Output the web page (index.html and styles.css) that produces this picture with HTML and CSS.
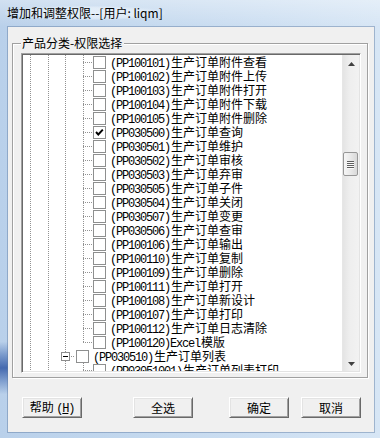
FILE: index.html
```html
<!DOCTYPE html>
<html lang="zh-CN">
<head>
<meta charset="utf-8">
<title>增加和调整权限</title>
<link rel="stylesheet" href="styles.css">
</head>
<body>
<div class="win">
  <div class="titlebar"><span class="title">增加和调整权限--[用户: liqm]</span></div>
  <div class="client">
    <div class="group">
      <div class="cap">产品分类-权限选择</div>
      <div class="tree">
        <div class="rows">
          <div class="row"><i class="g g1"></i><i class="g g2"></i><i class="g g3"></i><i class="c"></i><span class="cb"></span><span class="t"><span class="code">(PP100101)</span>生产订单附件查看</span></div>
          <div class="row"><i class="g g1"></i><i class="g g2"></i><i class="g g3"></i><i class="c"></i><span class="cb"></span><span class="t"><span class="code">(PP100102)</span>生产订单附件上传</span></div>
          <div class="row"><i class="g g1"></i><i class="g g2"></i><i class="g g3"></i><i class="c"></i><span class="cb"></span><span class="t"><span class="code">(PP100103)</span>生产订单附件打开</span></div>
          <div class="row"><i class="g g1"></i><i class="g g2"></i><i class="g g3"></i><i class="c"></i><span class="cb"></span><span class="t"><span class="code">(PP100104)</span>生产订单附件下载</span></div>
          <div class="row"><i class="g g1"></i><i class="g g2"></i><i class="g g3"></i><i class="c"></i><span class="cb"></span><span class="t"><span class="code">(PP100105)</span>生产订单附件删除</span></div>
          <div class="row"><i class="g g1"></i><i class="g g2"></i><i class="g g3"></i><i class="c"></i><span class="cb"><svg width="11" height="11" viewBox="0 0 11 11"><polyline points="2,5 4.3,7.5 8.8,2.6" fill="none" stroke="#000" stroke-width="1.9"/></svg></span><span class="t"><span class="code">(PP030500)</span>生产订单查询</span></div>
          <div class="row"><i class="g g1"></i><i class="g g2"></i><i class="g g3"></i><i class="c"></i><span class="cb"></span><span class="t"><span class="code">(PP030501)</span>生产订单维护</span></div>
          <div class="row"><i class="g g1"></i><i class="g g2"></i><i class="g g3"></i><i class="c"></i><span class="cb"></span><span class="t"><span class="code">(PP030502)</span>生产订单审核</span></div>
          <div class="row"><i class="g g1"></i><i class="g g2"></i><i class="g g3"></i><i class="c"></i><span class="cb"></span><span class="t"><span class="code">(PP030503)</span>生产订单弃审</span></div>
          <div class="row"><i class="g g1"></i><i class="g g2"></i><i class="g g3"></i><i class="c"></i><span class="cb"></span><span class="t"><span class="code">(PP030505)</span>生产订单子件</span></div>
          <div class="row"><i class="g g1"></i><i class="g g2"></i><i class="g g3"></i><i class="c"></i><span class="cb"></span><span class="t"><span class="code">(PP030504)</span>生产订单关闭</span></div>
          <div class="row"><i class="g g1"></i><i class="g g2"></i><i class="g g3"></i><i class="c"></i><span class="cb"></span><span class="t"><span class="code">(PP030507)</span>生产订单变更</span></div>
          <div class="row"><i class="g g1"></i><i class="g g2"></i><i class="g g3"></i><i class="c"></i><span class="cb"></span><span class="t"><span class="code">(PP030506)</span>生产订单查审</span></div>
          <div class="row"><i class="g g1"></i><i class="g g2"></i><i class="g g3"></i><i class="c"></i><span class="cb"></span><span class="t"><span class="code">(PP100106)</span>生产订单输出</span></div>
          <div class="row"><i class="g g1"></i><i class="g g2"></i><i class="g g3"></i><i class="c"></i><span class="cb"></span><span class="t"><span class="code">(PP100110)</span>生产订单复制</span></div>
          <div class="row"><i class="g g1"></i><i class="g g2"></i><i class="g g3"></i><i class="c"></i><span class="cb"></span><span class="t"><span class="code">(PP100109)</span>生产订单删除</span></div>
          <div class="row"><i class="g g1"></i><i class="g g2"></i><i class="g g3"></i><i class="c"></i><span class="cb"></span><span class="t"><span class="code">(PP100111)</span>生产订单打开</span></div>
          <div class="row"><i class="g g1"></i><i class="g g2"></i><i class="g g3"></i><i class="c"></i><span class="cb"></span><span class="t"><span class="code">(PP100108)</span>生产订单新设计</span></div>
          <div class="row"><i class="g g1"></i><i class="g g2"></i><i class="g g3"></i><i class="c"></i><span class="cb"></span><span class="t"><span class="code">(PP100107)</span>生产订单打印</span></div>
          <div class="row"><i class="g g1"></i><i class="g g2"></i><i class="g g3"></i><i class="c"></i><span class="cb"></span><span class="t"><span class="code">(PP100112)</span>生产订单日志清除</span></div>
          <div class="row"><i class="g g1"></i><i class="g g2"></i><i class="g g3"></i><i class="c last"></i><span class="cb"></span><span class="t"><span class="code">(PP100120)Excel</span>模版</span></div>
          <div class="row"><i class="g g1"></i><i class="g g2"></i><i class="c c3 box"></i><span class="cb"></span><span class="t"><span class="code">(PP030510)</span>生产订单列表</span></div>
          <div class="row"><i class="g g1"></i><i class="g g2"></i><i class="g g3"></i><i class="c last"></i><span class="cb"></span><span class="t"><span class="code">(PP03051001)</span>生产订单列表打印</span></div>
        </div>
        <div class="sb">
          <div class="arrow up"><svg width="7" height="4" viewBox="0 0 7 4"><polygon points="3.5,0 7,4 0,4" fill="#404040"/></svg></div>
          <div class="track-top"></div>
          <div class="thumb"><span></span><span></span><span></span><span></span></div>
          <div class="track-bot"></div>
          <div class="arrow down"><svg width="7" height="4" viewBox="0 0 7 4"><polygon points="0,0 7,0 3.5,4" fill="#404040"/></svg></div>
        </div>
      </div>
    </div>
    <div class="buttons">
      <button class="btn b-help">帮助 <span class="code">(<u>H</u>)</span></button>
      <button class="btn b-all">全选</button>
      <button class="btn b-ok">确定</button>
      <button class="btn b-cancel">取消</button>
    </div>
  </div>
</div>
</body>
</html>
```

FILE: styles.css
```css
html, body {
  margin: 0;
  padding: 0;
}
body {
  width: 380px;
  height: 438px;
  overflow: hidden;
  font-family: "Noto Sans CJK SC", "Noto Sans", sans-serif;
  font-size: 12px;
  color: #000;
}
.win {
  width: 380px;
  height: 438px;
  display: flex;
  flex-direction: column;
  background:
    linear-gradient(to bottom, rgba(0,0,0,0) 0, rgba(0,0,0,0) 78%, rgba(70,110,180,0.55) 81%, rgba(40,80,160,0.8) 84%, rgba(70,110,180,0.5) 87%, rgba(0,0,0,0) 90%) left top / 8px 100% no-repeat,
    linear-gradient(to right, #b9d0ea 0%, #c3d8ee 35%, #cddff2 70%, #d7e6f5 100%);
}
.titlebar {
  height: 27px;
  flex: none;
  display: flex;
  align-items: center;
  padding-left: 5px;
  background: linear-gradient(to bottom, rgba(255,255,255,0.35), rgba(255,255,255,0));
}
.title {
  line-height: 14px;
  padding: 0 2px;
  margin-top: -1px;
  background: radial-gradient(ellipse at center, rgba(235,243,251,0.9) 0%, rgba(235,243,251,0.6) 55%, rgba(235,243,251,0) 75%);
}
.client {
  flex: 1;
  margin: 0 6px 6px 8px;
  background: #f0f0f0;
  display: flex;
  flex-direction: column;
  box-shadow: 0 0 0 1px rgba(90,120,160,0.45);
}
.group {
  margin: 16px 6px 0 4px;
  border: 1px solid #a0a0a0;
  box-shadow: 1px 1px 0 #fff, inset 1px 1px 0 #fff;
  display: flex;
  flex-direction: column;
  padding-bottom: 4px;
}
.cap {
  align-self: flex-start;
  margin: -8px 0 0 8px;
  padding: 0 2px 0 1px;
  height: 14px;
  line-height: 14px;
  background: #f0f0f0;
}
.tree {
  margin: 3px 6px 0 8px;
  height: 320px;
  box-sizing: border-box;
  border-style: solid;
  border-width: 1px;
  border-color: #a0a0a0 #fff #fff #a0a0a0;
  box-shadow: inset 1px 1px 0 #696969, inset -1px -1px 0 #e3e3e3;
  padding: 1px;
  background: #fff;
  display: flex;
  overflow: hidden;
}
.rows {
  flex: 1;
  overflow: hidden;
  background: #fff;
}
.row {
  height: 14px;
  display: flex;
  align-items: flex-start;
  white-space: nowrap;
}
.g, .c {
  display: block;
  height: 14px;
  flex: none;
  position: relative;
  background-repeat: no-repeat;
}
.g {
  background-image: repeating-linear-gradient(to bottom, #929292 0 1px, transparent 1px 2px);
  background-size: 1px 14px;
  background-position: 7px 0;
}
.g1 { width: 18px; }
.g2 { width: 17px; }
.g3 { width: 18px; }
.c {
  width: 17px;
  background-image:
    repeating-linear-gradient(to bottom, #929292 0 1px, transparent 1px 2px),
    repeating-linear-gradient(to right, #929292 0 1px, transparent 1px 2px);
  background-size: 1px 14px, 9px 1px;
  background-position: 7px 0, 7px 7px;
}
.c.last {
  background-size: 1px 8px, 9px 1px;
}
.c3 { width: 18px; }
.box::before {
  content: "";
  position: absolute;
  left: 3px;
  top: 3px;
  width: 7px;
  height: 7px;
  border: 1px solid #8c8c8c;
  background: linear-gradient(#000, #000) center / 5px 1px no-repeat, #fff;
}
.cb {
  flex: none;
  width: 11px;
  height: 11px;
  margin-top: 1px;
  border: 1px solid #8e8f8f;
  background: #fff;
  display: flex;
  align-items: center;
  justify-content: center;
}
.cb svg { display: block; }
.t {
  margin-left: 4px;
  line-height: 14px;
  height: 14px;
}
.code {
  font-family: "Liberation Mono", monospace;
  font-size: 12px;
  letter-spacing: -1.2px;
  padding-right: 1px;
}
.sb {
  width: 17px;
  flex: none;
  display: flex;
  flex-direction: column;
  background: linear-gradient(to right, #e4e4e4 0, #eeeeee 40%, #f2f2f2 100%);
  border-left: 1px solid #e6e6e6;
  box-sizing: border-box;
}
.arrow {
  height: 17px;
  flex: none;
  display: flex;
  justify-content: center;
}
.arrow.up { align-items: flex-start; padding-top: 7px; box-sizing: border-box; }
.arrow.down { align-items: flex-start; padding-top: 8px; box-sizing: border-box; }
.arrow svg { display: block; margin-left: 1px; }
.track-top { height: 80px; flex: none; }
.track-bot { flex: 1; }
.thumb {
  height: 24px;
  flex: none;
  margin: 0 1px 0 0;
  box-sizing: border-box;
  border: 1px solid #979797;
  border-radius: 2px;
  background: linear-gradient(to right, #f6f6f6 0%, #e9e9e9 50%, #d9d9d9 100%);
  display: flex;
  flex-direction: column;
  align-items: center;
  justify-content: center;
  gap: 1px;
}
.thumb span {
  display: block;
  width: 7px;
  height: 1px;
  background: #5e5e5e;
  box-shadow: 0 1px 0 #fafafa;
}
.buttons {
  display: flex;
  margin-top: 19px;
  padding-left: 14px;
}
.btn {
  width: 60px;
  height: 21px;
  box-sizing: border-box;
  padding: 0;
  margin: 0;
  font-family: "Noto Sans CJK SC", "Noto Sans", sans-serif;
  font-size: 12px;
  line-height: 15px;
  color: #000;
  background: #f0f0f0;
  border-style: solid;
  border-width: 1px;
  border-color: #fff #696969 #696969 #fff;
  box-shadow: inset 1px 1px 0 #e3e3e3, inset -1px -1px 0 #a0a0a0;
}
.btn .code { letter-spacing: -1.2px; padding-right: 0; }
.b-all { margin-left: 51px; }
.b-ok { margin-left: 36px; }
.b-cancel { margin-left: 12px; }
```
